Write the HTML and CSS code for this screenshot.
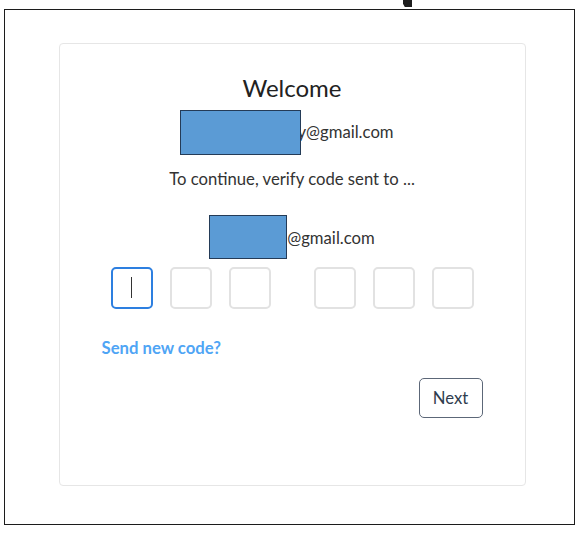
FILE: index.html
```html
<!DOCTYPE html>
<html lang="en">
<head>
<meta charset="utf-8">
<title>Verify code</title>
<link rel="stylesheet" href="styles.css">
</head>
<body>
<div class="top-strip"><div class="glyph-remnant"></div></div>
<div class="frame">
  <div class="card">
    <h1 class="title">Welcome</h1>
    <div class="email-line email-one"><span class="redact redact-one"></span><span class="email-text">y@gmail.com</span></div>
    <p class="info">To continue, verify code sent to ...</p>
    <div class="email-line email-two"><span class="redact redact-two"></span><span class="email-text">@gmail.com</span></div>
    <div class="code-row">
      <div class="code-group">
        <div class="code-box active"><span class="caret"></span></div>
        <div class="code-box"></div>
        <div class="code-box"></div>
      </div>
      <div class="code-group">
        <div class="code-box"></div>
        <div class="code-box"></div>
        <div class="code-box"></div>
      </div>
    </div>
    <a class="resend" href="#">Send new code?</a>
    <div class="actions">
      <button class="next-btn" type="button">Next</button>
    </div>
  </div>
</div>
</body>
</html>
```
FILE: styles.css
```css
* { box-sizing: border-box; }
html, body {
  margin: 0;
  padding: 0;
  background: #ffffff;
  font-family: Lato, "Open Sans", "Liberation Sans", sans-serif;
  color: #333333;
}
.top-strip {
  height: 9px;
  display: flex;
}
.glyph-remnant {
  margin-left: 403px;
  width: 9px;
  height: 7px;
  background: #1e1e1e;
  clip-path: polygon(0 0, 100% 0, 100% 100%, 20% 100%, 0 55%);
}
.frame {
  margin-left: 4px;
  width: 571px;
  height: 516px;
  border: 1.5px solid #1c1c1c;
  padding-top: 32.5px;
  padding-left: 53.5px;
}
.card {
  width: 467px;
  height: 443px;
  border: 1px solid #e6e6e6;
  border-radius: 4px;
  padding: 28px 42px 0 42px;
  display: flex;
  flex-direction: column;
}
.title {
  margin: 0;
  font-size: 24px;
  font-weight: 400;
  line-height: 32px;
  text-align: center;
  color: #222222;
}
.email-line {
  display: flex;
  justify-content: center;
  align-items: center;
  font-size: 16.7px;
  color: #333333;
}
.email-one {
  margin-top: 6px;
  height: 45px;
  padding-right: 10px;
}
.email-two {
  margin-top: 26px;
  height: 44px;
}
.email-two .email-text {
  padding-top: 3px;
}
.redact {
  display: block;
  background: #5b9bd5;
  border: 1px solid #243b57;
  position: relative;
  z-index: 1;
}
.redact-one {
  width: 121px;
  height: 45px;
  margin-right: -4px;
}
.redact-two {
  width: 78px;
  height: 44px;
}
.email-text {
  line-height: 20px;
}
.info {
  margin: 14px 0 0 0;
  font-size: 16.7px;
  line-height: 20px;
  text-align: center;
  color: #333333;
}
.code-row {
  margin-top: 8px;
  display: flex;
  justify-content: center;
  gap: 43px;
}
.code-group {
  display: flex;
  gap: 17px;
}
.code-box {
  width: 42px;
  height: 42px;
  border: 2px solid #e2e2e2;
  border-radius: 5px;
  display: flex;
  align-items: center;
  justify-content: center;
}
.code-box.active {
  border-color: #2d7fe0;
}
.caret {
  width: 1.5px;
  height: 21px;
  background: #333333;
}
.resend {
  margin-top: 29px;
  align-self: flex-start;
  font-size: 16.7px;
  line-height: 20px;
  font-weight: 700;
  color: #4fa5f5;
  text-decoration: none;
}
.actions {
  margin-top: 20px;
  display: flex;
  justify-content: flex-end;
}
.next-btn {
  width: 64px;
  height: 40px;
  border: 1.5px solid #5c6778;
  border-radius: 5px;
  background: #ffffff;
  font-family: Lato, "Open Sans", "Liberation Sans", sans-serif;
  font-size: 16.7px;
  color: #2f3d4e;
  padding: 0;
  cursor: pointer;
}
```
